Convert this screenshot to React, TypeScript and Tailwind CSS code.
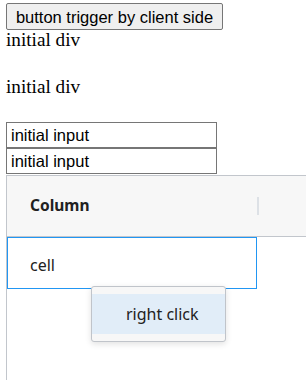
export default function App() {
  return (
    <div className="h-[380px] w-[306px] overflow-hidden bg-white px-[6px] pt-[3px]">
      <button className="block h-[27px] w-[217px] rounded-[2px] border border-[#767676] bg-[#efefef] px-[6px] text-[16.5px] leading-[18px] text-black [font-family:Arial,'Liberation_Sans',sans-serif]">
        button trigger by client side
      </button>

      <div className="-mt-[1px] text-[19.2px] leading-[22px] text-black [font-family:'Times_New_Roman','Liberation_Serif',serif]">
        <div>initial div</div>
        <p className="mt-[25px]">initial div</p>
      </div>

      <div className="mt-[24px] [font-family:Arial,'Liberation_Sans',sans-serif]">
        <input
          readOnly
          defaultValue="initial input"
          className="block h-[26px] w-[211px] border border-[#767676] px-[4px] text-[16.5px] text-black outline-none"
        />
        <input
          readOnly
          defaultValue="initial input"
          className="block h-[26px] w-[211px] border border-[#767676] px-[4px] text-[16.5px] text-black outline-none"
        />
      </div>

      {/* grid */}
      <div className="relative mt-[1px] h-[260px] w-[330px] border border-[#c2c6cc] [font-family:'Noto_Sans','Open_Sans',sans-serif]">
        <div className="flex h-[61px] items-center border-b border-[#c2c6cc] bg-[#f7f7f7]">
          <div className="flex h-full w-[250px] items-center pl-[23px] text-[15.5px] font-bold text-[#212121]">
            Column
          </div>
          <div className="h-[18px] w-[2px] bg-[#dde1e6]" />
        </div>
        <div className="flex h-[52px] w-[250px] items-center border border-[#2196f3] pb-[-2px] pl-[22px] pt-[3px] text-[16px] text-[#212121]">
          cell
        </div>

        {/* context menu */}
        <div className="absolute left-[84px] top-[110px] w-[135px] rounded-[3px] border border-[#c0c4ca] bg-[#f7f7f7] py-[7px] shadow-[0_2px_6px_rgba(0,0,0,0.12)]">
          <div className="flex h-[40px] items-center bg-[#e1edf8] pl-[34px] text-[16px] text-[#212121]">
            right click
          </div>
        </div>
      </div>
    </div>
  )
}
